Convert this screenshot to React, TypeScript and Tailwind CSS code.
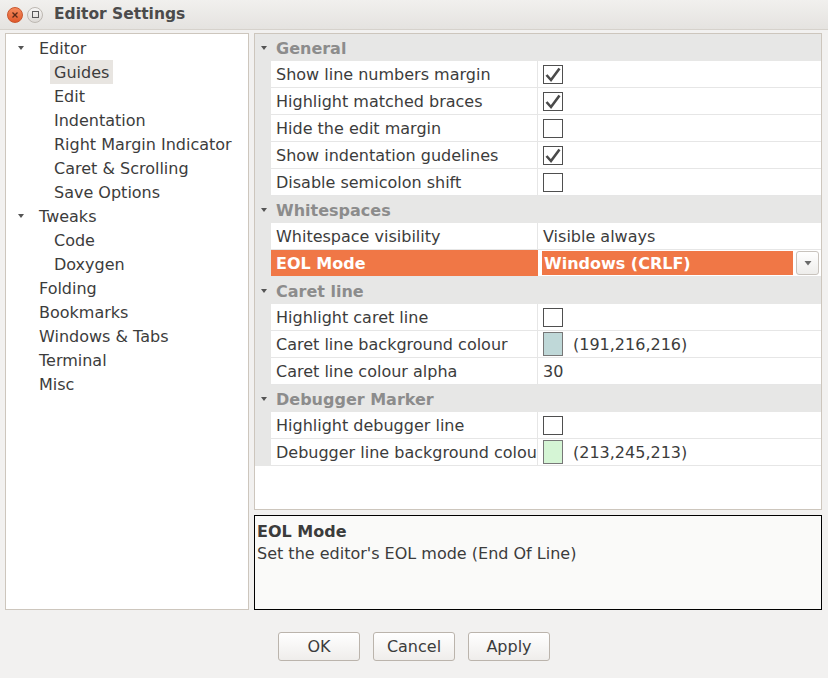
import React from 'react';

type Row =
  | { kind: 'header'; label: string }
  | { kind: 'check'; label: string; checked: boolean }
  | { kind: 'text'; label: string; value: string }
  | { kind: 'combo'; label: string; value: string }
  | { kind: 'colour'; label: string; value: string; swatch: string };

const rows: Row[] = [
  { kind: 'header', label: 'General' },
  { kind: 'check', label: 'Show line numbers margin', checked: true },
  { kind: 'check', label: 'Highlight matched braces', checked: true },
  { kind: 'check', label: 'Hide the edit margin', checked: false },
  { kind: 'check', label: 'Show indentation gudelines', checked: true },
  { kind: 'check', label: 'Disable semicolon shift', checked: false },
  { kind: 'header', label: 'Whitespaces' },
  { kind: 'text', label: 'Whitespace visibility', value: 'Visible always' },
  { kind: 'combo', label: 'EOL Mode', value: 'Windows (CRLF)' },
  { kind: 'header', label: 'Caret line' },
  { kind: 'check', label: 'Highlight caret line', checked: false },
  { kind: 'colour', label: 'Caret line background colour', value: '(191,216,216)', swatch: 'rgb(191,216,216)' },
  { kind: 'text', label: 'Caret line colour alpha', value: '30' },
  { kind: 'header', label: 'Debugger Marker' },
  { kind: 'check', label: 'Highlight debugger line', checked: false },
  { kind: 'colour', label: 'Debugger line background colour', value: '(213,245,213)', swatch: 'rgb(213,245,213)' },
];

const tree: { label: string; level: number; open?: boolean; selected?: boolean }[] = [
  { label: 'Editor', level: 0, open: true },
  { label: 'Guides', level: 1, selected: true },
  { label: 'Edit', level: 1 },
  { label: 'Indentation', level: 1 },
  { label: 'Right Margin Indicator', level: 1 },
  { label: 'Caret & Scrolling', level: 1 },
  { label: 'Save Options', level: 1 },
  { label: 'Tweaks', level: 0, open: true },
  { label: 'Code', level: 1 },
  { label: 'Doxygen', level: 1 },
  { label: 'Folding', level: 0 },
  { label: 'Bookmarks', level: 0 },
  { label: 'Windows & Tabs', level: 0 },
  { label: 'Terminal', level: 0 },
  { label: 'Misc', level: 0 },
];

function Arrow() {
  return (
    <svg width="8" height="6" viewBox="0 0 8 6" className="shrink-0">
      <path d="M1 1 L7 1 L4 5 Z" fill="#555" />
    </svg>
  );
}

function Check({ checked }: { checked: boolean }) {
  return (
    <div className="w-[20px] h-[19px] border border-[#4f4f4f] bg-white flex items-center justify-center">
      {checked && (
        <svg width="18" height="17" viewBox="0 0 18 17">
          <path d="M2.5 9 L7 14 L15.5 2.5" stroke="#4a4a4a" strokeWidth="2.6" fill="none" strokeLinejoin="miter" />
        </svg>
      )}
    </div>
  );
}

function PropRow({ row }: { row: Row }) {
  if (row.kind === 'header') {
    return (
      <div className="h-[27px] flex items-center bg-[#e7e7e6] shrink-0">
        <div className="w-[16px] pl-[5px] flex items-center">
          <Arrow />
        </div>
        <span className="pl-[5px] pt-[2px] font-bold text-[#8c8c8c]">{row.label}</span>
      </div>
    );
  }

  if (row.kind === 'combo') {
    return (
      <div className="h-[27px] flex bg-[#e7e7e6] shrink-0">
        <div className="w-[16px]" />
        <div className="flex-1 flex bg-white border-b border-[#e6e6e6]">
          <div className="w-[267px] bg-[#f07746] text-white font-bold pl-[5px] pt-[2px] flex items-center">{row.label}</div>
          <div className="flex-1 flex items-stretch pl-[4px] pr-[2px] py-[1px] gap-[3px]">
            <div className="flex-1 bg-[#f07746] text-white font-bold pl-[2px] pt-[2px] flex items-center">{row.value}</div>
            <div className="w-[23px] rounded-[3px] border border-[#c8c3bd] bg-gradient-to-b from-white to-[#eeedeb] flex items-center justify-center">
              <svg width="8" height="6" viewBox="0 0 8 6">
                <path d="M0.5 1 L7.5 1 L4 5.5 Z" fill="#6a6a6a" />
              </svg>
            </div>
          </div>
        </div>
      </div>
    );
  }

  return (
    <div className="h-[27px] flex bg-[#e7e7e6] shrink-0">
      <div className="w-[16px]" />
      <div className="flex-1 flex bg-white border-b border-[#e6e6e6]">
        <div className="w-[267px] border-r border-[#e6e6e6] pl-[5px] pt-[2px] flex items-center overflow-hidden whitespace-nowrap">
          {row.label}
        </div>
        <div className="flex-1 flex items-center pl-[5px]">
          {row.kind === 'check' && <Check checked={row.checked} />}
          {row.kind === 'text' && <span className="pt-[2px]">{row.value}</span>}
          {row.kind === 'colour' && (
            <>
              <div className="w-[20px] h-[24px] border border-[#777] mt-[-1px]" style={{ background: row.swatch }} />
              <span className="pl-[10px] pt-[2px]">{row.value}</span>
            </>
          )}
        </div>
      </div>
    </div>
  );
}

function Button({ label }: { label: string }) {
  return (
    <div className="w-[82px] h-[29px] rounded-[3px] border border-[#bbb4ac] bg-gradient-to-b from-white to-[#efedeb] flex items-center justify-center pt-[1px] text-[#3c3c3c]">
      {label}
    </div>
  );
}

export default function App() {
  return (
    <div className="w-[828px] h-[678px] bg-[#f2f1f0] flex flex-col font-['DejaVu_Sans',sans-serif] text-[16px] leading-none text-[#3c3c3c] overflow-hidden">
      {/* title bar */}
      <div className="h-[30px] shrink-0 flex items-center bg-gradient-to-b from-[#f1f0ee] to-[#e5e3e0] border-b border-[#d6d2cc]">
        <div className="ml-[7px] w-[16px] h-[16px] rounded-full bg-gradient-to-b from-[#f58a5c] to-[#e0582a] border border-[#c9552c] flex items-center justify-center">
          <svg width="8" height="8" viewBox="0 0 8 8">
            <path d="M1.5 1.5 L6.5 6.5 M6.5 1.5 L1.5 6.5" stroke="#5a2a18" strokeWidth="1.3" />
          </svg>
        </div>
        <div className="ml-[4px] w-[16px] h-[16px] rounded-full bg-gradient-to-b from-[#f7f6f5] to-[#dddad6] border border-[#bdb8b2] flex items-center justify-center">
          <div className="w-[7px] h-[7px] border border-[#5a5a5a]" />
        </div>
        <span className="ml-[11px] pt-[1px] font-bold text-[15.5px] text-[#4b4b4b]">Editor Settings</span>
      </div>

      {/* body */}
      <div className="flex gap-[5px] pl-[5px] pr-[6px] pt-[3px] h-[580px] shrink-0">
        {/* tree */}
        <div className="w-[244px] h-[577px] bg-white border border-[#cdc6bd] pt-[2px]">
          {tree.map((t) => (
            <div key={t.label} className="h-[24px] flex items-center">
              <div className="w-[29px] flex justify-end pr-[10px]">{t.open && <Arrow />}</div>
              {t.level === 1 && <div className="w-[15px]" />}
              <span
                className={
                  'h-[24px] flex items-center px-[4px] pt-[2px] whitespace-nowrap ' +
                  (t.selected ? 'bg-[#e8e5e1]' : '')
                }
              >
                {t.label}
              </span>
            </div>
          ))}
        </div>

        {/* right column */}
        <div className="flex-1 flex flex-col gap-[5px]">
          <div className="h-[477px] bg-white border border-[#cdc6bd] flex flex-col">
            {rows.map((r, i) => (
              <PropRow key={i} row={r} />
            ))}
          </div>
          <div className="h-[95px] bg-[#fafaf9] border border-black px-[2px] pt-[8px] flex flex-col gap-[6px]">
            <span className="font-bold leading-[16px]">EOL Mode</span>
            <span className="leading-[16px]">Set the editor's EOL mode (End Of Line)</span>
          </div>
        </div>
      </div>

      {/* buttons */}
      <div className="flex justify-center gap-[13px] pt-[22px]">
        <Button label="OK" />
        <Button label="Cancel" />
        <Button label="Apply" />
      </div>
    </div>
  );
}
